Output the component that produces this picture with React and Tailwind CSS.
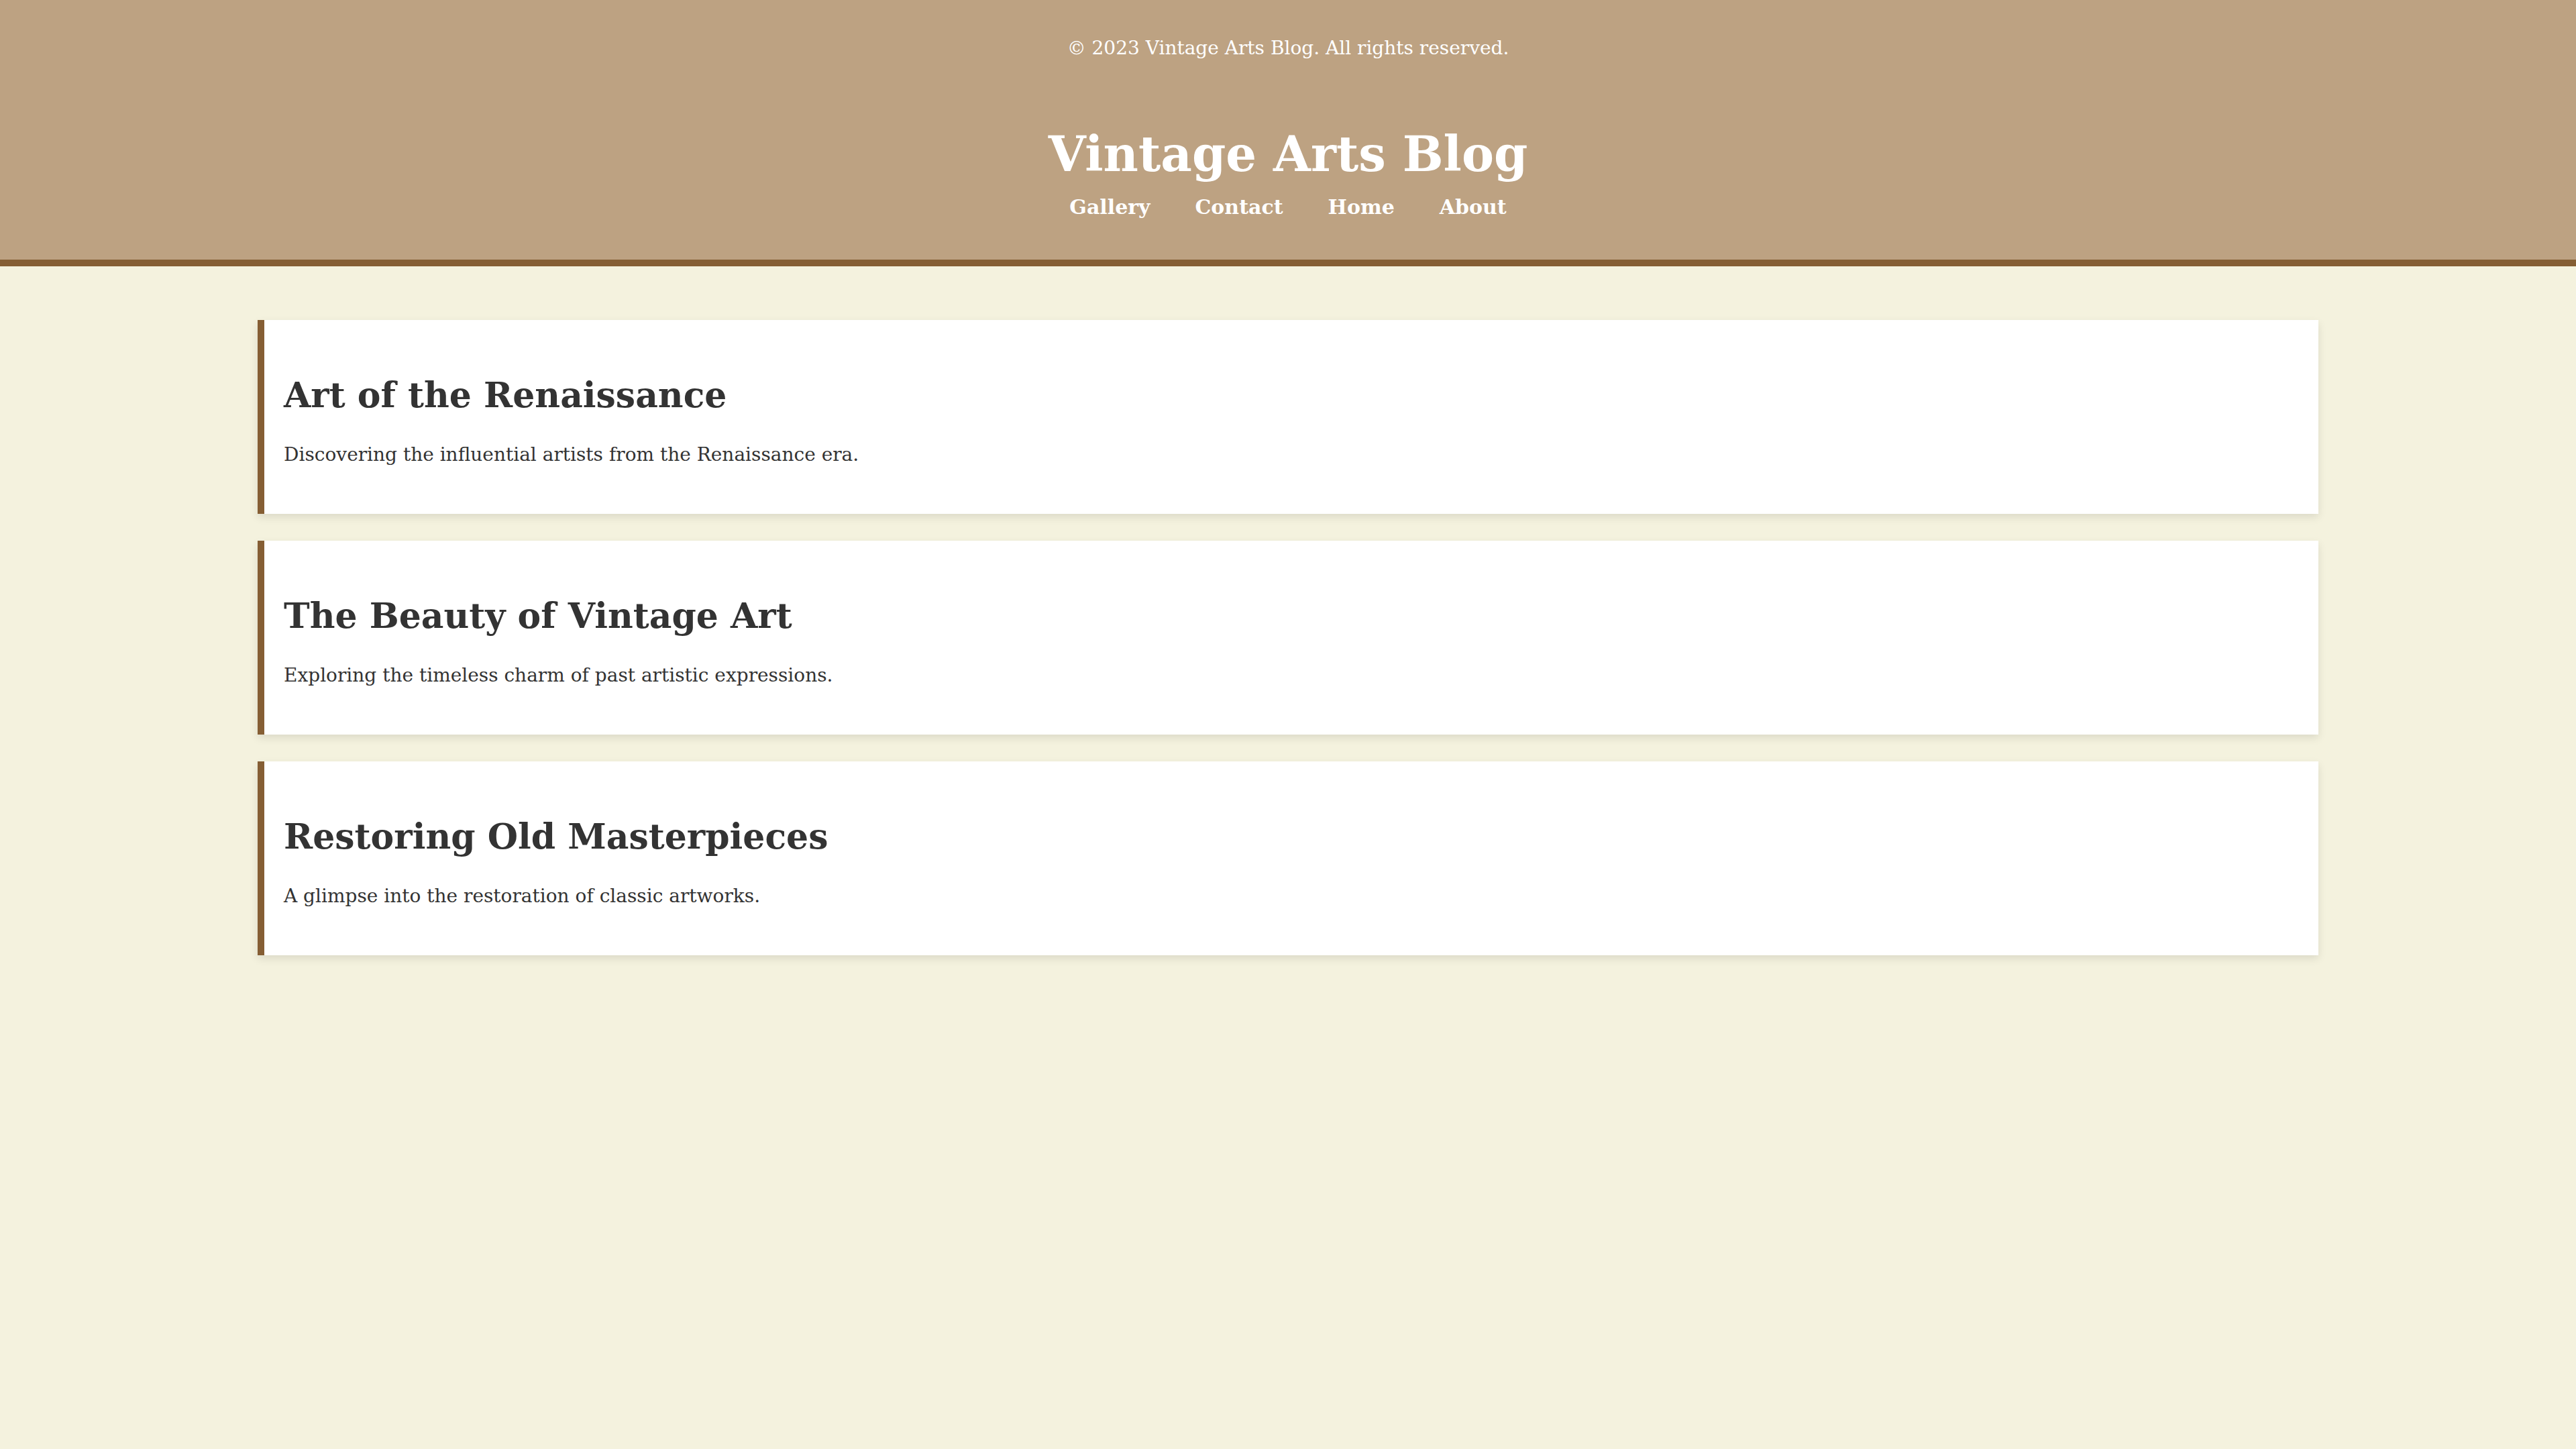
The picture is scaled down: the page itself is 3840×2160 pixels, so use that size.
const POSTS = [
  { title: "Art of the Renaissance", text: "Discovering the influential artists from the Renaissance era." },
  { title: "The Beauty of Vintage Art", text: "Exploring the timeless charm of past artistic expressions." },
  { title: "Restoring Old Masterpieces", text: "A glimpse into the restoration of classic artworks." },
];

const NAV = ["Gallery", "Contact", "Home", "About"];

export default function App() {
  return (
    <div className="min-h-screen bg-[#F4F2DE] font-['DejaVu_Serif',Georgia,serif]">
      {/* Header */}
      <header className="bg-[#BDA282] border-b-[10px] border-[#855E34] text-white text-center pt-[47px] pb-[58px]">
        <p className="text-[28px] leading-[50px]">© 2023 Vintage Arts Blog. All rights reserved.</p>
        <h1 className="mt-[93px] text-[72px] leading-[80px] font-bold">Vintage Arts Blog</h1>
        <nav className="mt-[19px] flex justify-center gap-[67px] text-[30px] leading-[40px] font-bold">
          {NAV.map(n => (
            <a key={n} href="#">{n}</a>
          ))}
        </nav>
      </header>

      {/* Posts */}
      <main className="pt-[80px] flex flex-col items-center gap-[40px]">
        {POSTS.map(p => (
          <article
            key={p.title}
            className="w-[80%] h-[289px] bg-white border-l-[10px] border-[#855E34] shadow-[0_5px_12px_rgba(0,0,0,0.1)] pl-[29px] pt-[77px] text-[#333333]"
          >
            <h2 className="text-[52px] leading-[70px] font-bold">{p.title}</h2>
            <p className="mt-[34px] text-[28px] leading-[40px]">{p.text}</p>
          </article>
        ))}
      </main>
    </div>
  );
}
